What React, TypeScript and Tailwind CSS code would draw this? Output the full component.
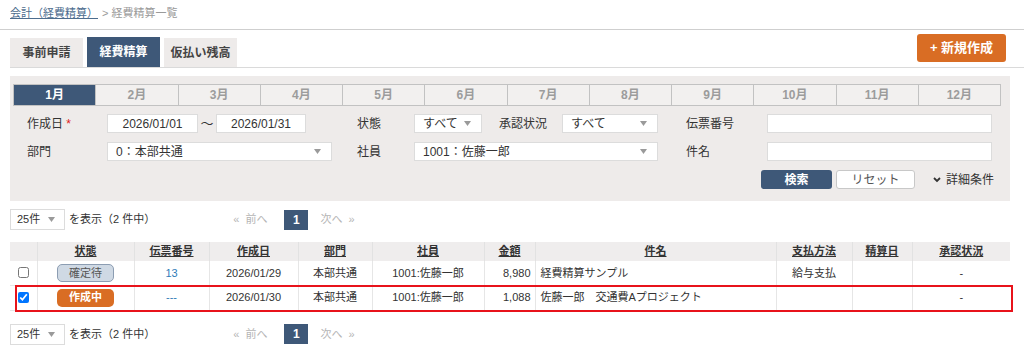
import { useState } from "react";

const months = ["1月", "2月", "3月", "4月", "5月", "6月", "7月", "8月", "9月", "10月", "11月", "12月"];

function Arrow() {
  return (
    <svg width="7" height="5" viewBox="0 0 7 5" className="shrink-0">
      <path d="M0 0h7L3.5 5z" fill="#9a9a9a" />
    </svg>
  );
}

function SelectBox({ value, className }: { value: string; className: string }) {
  return (
    <div
      className={`flex h-[19px] items-center justify-between border border-[#dcdcdc] bg-white pr-[10px] pl-[8px] text-[12px] text-[#333] ${className}`}
    >
      <span>{value}</span>
      <Arrow />
    </div>
  );
}

function TextBox({ value, className }: { value?: string; className: string }) {
  return (
    <div
      className={`flex h-[19px] items-center justify-center border border-[#dcdcdc] bg-white text-[12px] text-[#333] ${className}`}
    >
      {value}
    </div>
  );
}

function Pager() {
  return (
    <div className="flex h-[21px] items-center text-[11px]">
      <div className="flex h-[21px] w-[55px] items-center justify-between border border-[#dcdcdc] bg-white pr-[9px] pl-[6px]">
        <span>25件</span>
        <Arrow />
      </div>
      <span className="ml-[4px]">を表示（2 件中）</span>
      <div className="ml-[78px] flex items-center text-[#b5b5b5]">
        <span>« &nbsp;前へ</span>
        <span className="ml-[17px] flex h-[20px] w-[24px] items-center justify-center bg-[#3e5878] text-[12px] font-bold text-white">1</span>
        <span className="ml-[12px]">次へ &nbsp;»</span>
      </div>
    </div>
  );
}

type Row = {
  checked: boolean;
  status: "wait" | "draft";
  no: string;
  date: string;
  dept: string;
  emp: string;
  amount: string;
  title: string;
  pay: string;
};

const rows: Row[] = [
  { checked: false, status: "wait", no: "13", date: "2026/01/29", dept: "本部共通", emp: "1001:佐藤一郎", amount: "8,980", title: "経費精算サンプル", pay: "給与支払" },
  { checked: true, status: "draft", no: "---", date: "2026/01/30", dept: "本部共通", emp: "1001:佐藤一郎", amount: "1,088", title: "佐藤一郎　交通費Aプロジェクト", pay: "" },
];

const headers = ["", "状態", "伝票番号", "作成日", "部門", "社員", "金額", "件名", "支払方法", "精算日", "承認状況"];
const widths = [27, 97, 75, 89, 74, 112, 51, 241, 76, 60, 98];

export default function App() {
  const [month, setMonth] = useState(0);

  return (
    <div className="h-[348px] w-[1024px] overflow-hidden bg-white font-['Liberation_Sans','Noto_Sans_CJK_JP',sans-serif] text-[#333]">
      <div className="flex h-[30px] items-center border-b border-[#cfcfcf] px-[10px] pb-[2px] text-[11px]">
        <span className="text-[#4d6d8e] underline">会計（経費精算）</span>
        <span className="ml-[4px] text-[#9a9a9a]">&gt; 経費精算一覧</span>
      </div>

      <div className="ml-[10px] flex h-[38px] items-end justify-between border-b border-[#dadada]">
        <div className="flex items-end gap-[4px] text-[12px] font-bold">
          <div className="flex h-[29px] w-[73px] items-center justify-center bg-[#eeebea] text-[#444]">事前申請</div>
          <div className="flex h-[30px] w-[73px] items-center justify-center bg-[#3e5878] text-white">経費精算</div>
          <div className="flex h-[29px] w-[73px] items-center justify-center bg-[#eeebea] text-[#444]">仮払い残高</div>
        </div>
        <button className="mr-[18px] mb-[5px] flex h-[28px] w-[89px] items-center justify-center rounded-[3px] bg-[#d96d24] text-[13px] font-bold text-white">
          + 新規作成
        </button>
      </div>

      <div className="mt-[8px] ml-[10px] h-[125px] w-[1000px] bg-[#eeebea] pt-[8px] pl-[3px]">
        <div className="flex h-[22px] w-[988px] border border-[#c2c2c2]">
          {months.map((m, i) => (
            <div
              key={m}
              onClick={() => setMonth(i)}
              className={`flex flex-1 items-center justify-center text-[12px] font-bold ${i > 0 ? "border-l border-[#c2c2c2]" : ""} ${
                i === month ? "bg-[#3e5878] text-white" : "bg-[#f2f0ef] text-[#9c9c9c]"
              }`}
            >
              {m}
            </div>
          ))}
        </div>

        <div className="mt-[8px] flex h-[19px] items-center pl-[14px] text-[12px]">
          <span className="w-[80px]">
            作成日 <span className="text-[#e02020]">*</span>
          </span>
          <TextBox value="2026/01/01" className="w-[91px]" />
          <span className="w-[18px] text-center text-[13px]">〜</span>
          <TextBox value="2026/01/31" className="w-[90px]" />
          <span className="ml-[51px] w-[57px]">状態</span>
          <SelectBox value="すべて" className="w-[68px]" />
          <span className="w-[80px] pl-[17px]">承認状況</span>
          <SelectBox value="すべて" className="w-[96px]" />
          <span className="ml-[28px] w-[81px]">伝票番号</span>
          <TextBox className="w-[225px]" />
        </div>

        <div className="mt-[9px] flex h-[19px] items-center pl-[14px] text-[12px]">
          <span className="w-[80px]">部門</span>
          <SelectBox value="0：本部共通" className="w-[225px]" />
          <span className="ml-[25px] w-[57px]">社員</span>
          <SelectBox value="1001：佐藤一郎" className="w-[244px]" />
          <span className="ml-[28px] w-[81px]">件名</span>
          <TextBox className="w-[225px]" />
        </div>

        <div className="mt-[9px] flex h-[19px] items-center justify-end pr-[16px] text-[12px]">
          <button className="flex h-[19px] w-[71px] items-center justify-center rounded-[3px] bg-[#3e5878] font-bold text-white">検索</button>
          <button className="ml-[4px] flex h-[19px] w-[79px] items-center justify-center rounded-[3px] border border-[#c8c8c8] bg-white text-[#555]">
            リセット
          </button>
          <span className="ml-[18px] flex items-center gap-[5px]">
            <svg width="8" height="6" viewBox="0 0 8 6">
              <path d="M1 1l3 3 3-3" stroke="#333" strokeWidth="1.8" fill="none" />
            </svg>
            詳細条件
          </span>
        </div>
      </div>

      <div className="mt-[8px] ml-[10px]">
        <Pager />
      </div>

      <div className="relative mt-[12px] ml-[10px] w-[1000px]">
        <table className="w-[1000px] table-fixed border-collapse text-[11px]">
          <colgroup>
            {widths.map((w, i) => (
              <col key={i} style={{ width: w }} />
            ))}
          </colgroup>
          <thead>
            <tr className="h-[19px] bg-[#efeded]">
              {headers.map((h, i) => (
                <th key={i} className="border-r border-[#e2e2e2] p-0 text-center font-bold last:border-r-0">
                  <span className="underline">{h}</span>
                </th>
              ))}
            </tr>
          </thead>
          <tbody>
            {rows.map((r, i) => (
              <tr key={i} className={`${i === 0 ? "h-[24px]" : "h-[25px]"} border-b border-[#e6e6e6] bg-white`}>
                <td className="border-r border-[#e6e6e6] p-0 pl-[8px]">
                  <input type="checkbox" defaultChecked={r.checked} className="block h-[11px] w-[11px]" />
                </td>
                <td className="border-r border-[#e6e6e6] p-0">
                  {r.status === "wait" ? (
                    <div className="mx-auto flex h-[18px] w-[57px] items-center justify-center rounded-[5px] border border-[#8c9db2] bg-[#cfd9e4] text-[#555]">
                      確定待
                    </div>
                  ) : (
                    <div className="mx-auto flex h-[18px] w-[57px] items-center justify-center rounded-[5px] bg-[#d96d24] font-bold text-white">
                      作成中
                    </div>
                  )}
                </td>
                <td className="border-r border-[#e6e6e6] p-0 text-center text-[#2f7bb8]">{r.no}</td>
                <td className="border-r border-[#e6e6e6] p-0 text-center">{r.date}</td>
                <td className="border-r border-[#e6e6e6] p-0 text-center">{r.dept}</td>
                <td className="border-r border-[#e6e6e6] p-0 text-center">{r.emp}</td>
                <td className="border-r border-[#e6e6e6] p-0 pr-[4px] text-right">{r.amount}</td>
                <td className="border-r border-[#e6e6e6] p-0 pl-[5px]">{r.title}</td>
                <td className="border-r border-[#e6e6e6] p-0 text-center">{r.pay}</td>
                <td className="border-r border-[#e6e6e6] p-0"></td>
                <td className="p-0 text-center">-</td>
              </tr>
            ))}
          </tbody>
        </table>
        <div className="pointer-events-none absolute top-[43px] left-[5px] h-[27px] w-[998px] border-2 border-[#e8131b]" />
      </div>

      <div className="mt-[13px] ml-[10px]">
        <Pager />
      </div>
    </div>
  );
}
